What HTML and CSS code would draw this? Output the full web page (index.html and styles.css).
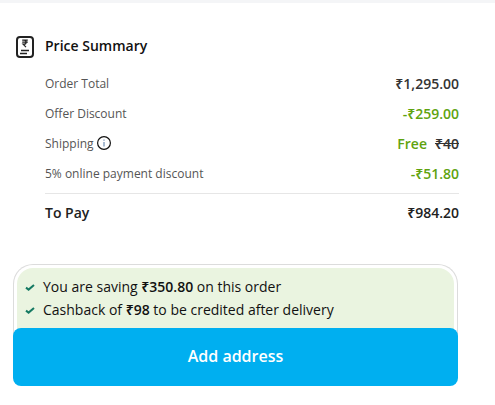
FILE: index.html
```html
<!DOCTYPE html>
<html lang="en">
<head>
  <meta charset="UTF-8" />
  <meta name="viewport" content="width=device-width, initial-scale=1" />
  <title>Price Summary</title>
  <link rel="stylesheet" href="styles.css">
</head>
<body>
  <main>
    <section class="summary">
      <svg class="bill-icon" width="18" height="22" viewBox="0 0 18 22" fill="none" stroke="#222" aria-hidden="true">
        <rect x="1" y="1" width="16" height="20" rx="3" stroke-width="2" />
        <path d="M6.2 4.2h5.6M6.2 6.2h5.6M6.2 4.2h1.8c2.8 0 2.8 4 0 4H7l3 3" stroke-width="1.2" />
        <path d="M5 14.5h8M4 17.5h7" stroke-width="1.4" />
      </svg>
      <div class="details">
        <h2>Price Summary</h2>
        <dl>
          <div class="row">
            <dt>Order Total</dt>
            <dd>₹1,295.00</dd>
          </div>
          <div class="row">
            <dt>Offer Discount</dt>
            <dd class="green">-₹259.00</dd>
          </div>
          <div class="row">
            <dt>Shipping
              <button class="info" type="button" aria-label="Shipping info">
                <svg width="14" height="14" viewBox="0 0 14 14" fill="none" aria-hidden="true">
                  <circle cx="7" cy="7" r="6.4" stroke="#111" stroke-width="1.2" />
                  <path d="M7 6v4.5M7 3.6v1.2" stroke="#6f8fb5" stroke-width="1.2" />
                </svg>
              </button>
            </dt>
            <dd><span class="green">Free</span><del>₹40</del></dd>
          </div>
          <div class="row">
            <dt>5% online payment discount</dt>
            <dd class="green">-₹51.80</dd>
          </div>
          <div class="row total">
            <dt>To Pay</dt>
            <dd>₹984.20</dd>
          </div>
        </dl>
      </div>
    </section>

    <section class="checkout">
      <div class="savings">
        <ul>
          <li>
            <svg width="10" height="8" viewBox="0 0 10 8" fill="none" stroke="#167a63" stroke-width="2" aria-hidden="true"><path d="M1 4.6l2.6 2L9 2" /></svg>
            <span>You are saving <b>₹350.80</b> on this order</span>
          </li>
          <li>
            <svg width="10" height="8" viewBox="0 0 10 8" fill="none" stroke="#167a63" stroke-width="2" aria-hidden="true"><path d="M1 4.6l2.6 2L9 2" /></svg>
            <span>Cashback of <b>₹98</b> to be credited after delivery</span>
          </li>
        </ul>
      </div>
      <button class="add-address" type="button">Add address</button>
    </section>
  </main>
</body>
</html>
```
FILE: styles.css
```css
* {
  box-sizing: border-box;
}
body {
  margin: 0;
  border-top: 3px solid #f4f5f7;
  background: #fff;
  color: #212121;
  font-family: "Open Sans", "Noto Sans", sans-serif;
  font-size: 14px;
}
h2, dl, dd, ul {
  margin: 0;
  padding: 0;
}
.summary {
  display: flex;
  align-items: flex-start;
  gap: 11px;
  padding: 33px 36px 0 16px;
}
.bill-icon {
  flex: none;
}
.details {
  flex: 1;
}
h2 {
  color: #111;
  font-size: 14px;
  font-weight: 600;
  line-height: 20px;
  margin-bottom: 12px;
}
.row {
  display: flex;
  justify-content: space-between;
  align-items: center;
  height: 30px;
}
.row dt {
  display: flex;
  align-items: center;
  gap: 3px;
  color: #555;
  font-size: 12px;
}
.row dd {
  color: #333;
  font-weight: 600;
}
.row .green {
  color: #5fa30f;
}
.row del {
  margin-left: 8px;
}
.info {
  display: flex;
  padding: 0;
  border: 0;
  background: none;
  cursor: pointer;
}
.total {
  height: 38px;
  margin-top: 5px;
  border-top: 1px solid #e6e6e6;
}
.total dt, .total dd {
  color: #212121;
  font-size: 14px;
  font-weight: 600;
}
.checkout {
  margin: 33px 37px 0 13px;
}
.savings {
  padding: 3px 3px 0;
  border: 1px solid #dcdcdc;
  border-bottom: 0;
  border-radius: 20px 20px 0 0;
}
.savings ul {
  padding: 7px 8px 15px;
  border-radius: 16px 16px 0 0;
  background: #eaf4e0;
  list-style: none;
}
.savings li {
  display: flex;
  align-items: center;
  gap: 8px;
  color: #111;
  line-height: 23px;
}
.savings b {
  font-weight: 600;
}
.add-address {
  display: block;
  position: relative;
  width: 100%;
  height: 58px;
  margin-top: -8px;
  padding: 0 0 2px;
  border: 0;
  border-radius: 8px;
  background: #00aff0;
  color: #fff;
  font: 600 16px "Open Sans", "Noto Sans", sans-serif;
  cursor: pointer;
}
```
